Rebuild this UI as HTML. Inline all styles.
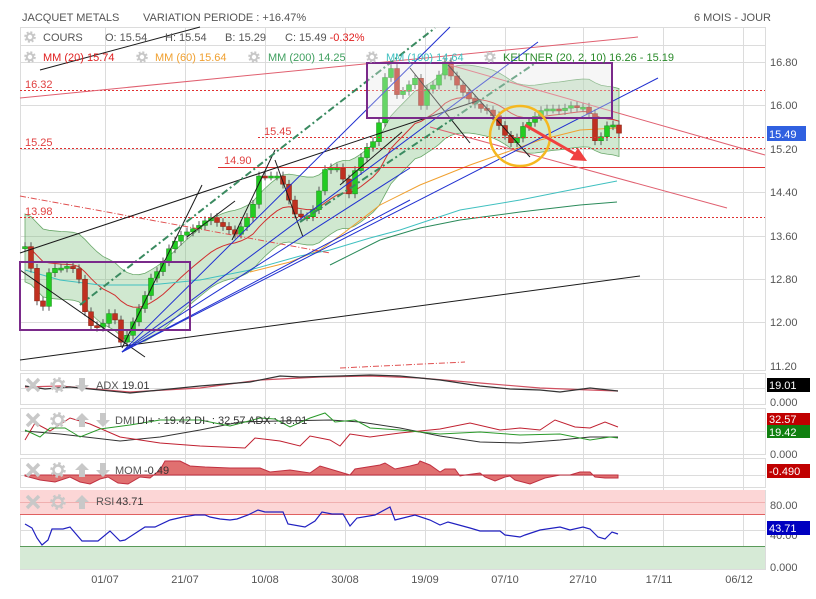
<!DOCTYPE html>
<html><head><meta charset="utf-8">
<style>
body{margin:0;background:#fff;width:816px;height:599px;overflow:hidden;font-family:"Liberation Sans",sans-serif;}
svg{position:absolute;left:0;top:0}
text{font-family:"Liberation Sans",sans-serif;font-size:11px}
</style></head><body>
<svg id="s" width="816" height="599" xmlns="http://www.w3.org/2000/svg">
<defs>
<g id="ix"><path d="M-6,-6L6,6M6,-6L-6,6" stroke="#c8c8c8" stroke-width="3.5"/></g>
<g id="ig"><circle r="4.5" fill="none" stroke="#c8c8c8" stroke-width="2.5"/><circle r="6.5" fill="none" stroke="#c8c8c8" stroke-width="2.5" stroke-dasharray="2.5,2.6"/></g>
<g id="isg"><circle r="3.2" fill="none" stroke="#c8c8c8" stroke-width="2"/><circle r="4.8" fill="none" stroke="#c8c8c8" stroke-width="2" stroke-dasharray="2,1.8"/></g>
<g id="iu"><polygon points="0,-7 7,0 3,0 3,7 -3,7 -3,0 -7,0" fill="#c8c8c8"/></g>
<g id="id"><polygon points="0,7 7,0 3,0 3,-7 -3,-7 -3,0 -7,0" fill="#c8c8c8"/></g>
</defs>
<g fill="none" stroke="#dcdcdc" stroke-width="1">
<rect x="20.5" y="27.5" width="745" height="343"/>
<rect x="20.5" y="373.5" width="745" height="31"/>
<rect x="20.5" y="408.5" width="745" height="46"/>
<rect x="20.5" y="458.5" width="745" height="29"/>
<rect x="20.5" y="490.5" width="745" height="79"/>
<path d="M105.5 27V370M185.5 27V370M265.5 27V370M345.5 27V370M425.5 27V370M505.5 27V370M583.5 27V370M663.5 27V370M743.5 27V370
M105.5 373V569M185.5 373V569M265.5 373V569M345.5 373V569M425.5 373V569M505.5 373V569M583.5 373V569M663.5 373V569M743.5 373V569
M20 62.5H765M20 105.5H765M20 149.5H765M20 192.5H765M20 236.5H765M20 279.5H765M20 322.5H765M20 45.5H765
M20 388.5H765M20 431.5H765M20 475.5H765M20 530.5H765"/>
</g>
<rect x="20" y="490" width="745" height="24" fill="#fcd6d6"/>
<line x1="20" y1="514.5" x2="765" y2="514.5" stroke="#e06060"/>
<rect x="20" y="546" width="745" height="23" fill="#d6ead6"/>
<line x1="20" y1="546.5" x2="765" y2="546.5" stroke="#5a9a5a"/>
<line x1="20" y1="502.5" x2="765" y2="502.5" stroke="#f0b0b0"/>

<g id="keltner"></g>
<polyline fill="none" stroke="#f0a030" stroke-width="1" points="250,272 290,262 320,250 345,232 380,205 420,185 470,165 507,152 540,140 580,130 617,128"/>
<polyline fill="none" stroke="#40c0c0" stroke-width="1" points="25,270 60,280 100,285 150,285 200,280 250,270 300,256 330,250 370,238 400,230 460,210 520,200 560,192 617,181"/>
<polyline fill="none" stroke="#2a8a5a" stroke-width="1" points="330,265 380,240 420,228 460,220 520,212 580,205 617,202"/>
<g id="candles"></g>

<g stroke="#e03030" stroke-width="1" stroke-dasharray="2,2" fill="none">
<line x1="20" y1="90.5" x2="765" y2="90.5"/>
<line x1="20" y1="148.5" x2="765" y2="148.5"/>
<line x1="258" y1="137.5" x2="765" y2="137.5"/>
<line x1="20" y1="217.5" x2="765" y2="217.5"/>
</g>
<line x1="218" y1="167.5" x2="765" y2="167.5" stroke="#e03030"/>
<g fill="#e04040" font-size="11"><text x="25" y="88">16.32</text><text x="25" y="146">15.25</text><text x="264" y="135">15.45</text><text x="224" y="164">14.90</text><text x="25" y="215">13.98</text></g>
<line x1="20" y1="196" x2="330" y2="253" stroke="#e05050" stroke-dasharray="6,2,1,2"/>
<line x1="340" y1="368" x2="465" y2="362" stroke="#e05050" stroke-dasharray="6,2,1,2"/>

<g fill="none" stroke-width="1">
<line x1="20" y1="98" x2="638" y2="37" stroke="#e06070"/>
<line x1="450" y1="65" x2="765" y2="155" stroke="#e06070"/>
<line x1="430" y1="127" x2="727" y2="208" stroke="#e06070"/>
<g stroke="#1a1a1a">
<line x1="20" y1="360" x2="640" y2="276"/>
<line x1="20" y1="253" x2="480" y2="100"/>
<line x1="40" y1="70" x2="200" y2="27"/>
<line x1="20" y1="270" x2="145" y2="357"/>
<line x1="122" y1="348" x2="202" y2="185"/>
<line x1="187" y1="237" x2="235" y2="201"/>
<line x1="232" y1="240" x2="275" y2="150"/>
<line x1="275" y1="160" x2="303" y2="237"/>
<line x1="340" y1="185" x2="402" y2="132"/>
<line x1="410" y1="68" x2="470" y2="143"/>
<line x1="448" y1="65" x2="530" y2="157"/>
</g>
<g stroke="#2030d0">
<line x1="122" y1="352" x2="450" y2="27"/>
<line x1="122" y1="352" x2="538" y2="42"/>
<line x1="122" y1="352" x2="658" y2="78"/>
<line x1="122" y1="352" x2="410" y2="168"/>
<line x1="122" y1="352" x2="410" y2="200"/>
</g>
<g stroke="#3a8a60" stroke-width="2" stroke-dasharray="7,3,2,3">
<line x1="80" y1="305" x2="435" y2="28"/>
<line x1="300" y1="222" x2="537" y2="62"/>
</g>
</g>
<rect x="20" y="262" width="170" height="68" fill="none" stroke="#7a2a8a" stroke-width="2"/>
<rect x="367" y="63" width="245" height="55" fill="rgba(230,230,230,0.35)" stroke="#7a2a8a" stroke-width="2"/>
<circle cx="520" cy="136" r="30" fill="none" stroke="#f5b820" stroke-width="2.5"/>
<line x1="525" y1="125" x2="577" y2="155" stroke="#f04040" stroke-width="3"/>
<polygon points="587,161 570,160 578,148" fill="#f04040"/>

<polyline fill="none" stroke="#d05060" stroke-width="1.2" points="25,387 60,386 130,392 200,388 260,380 320,377 370,376 420,378 480,383 540,388 590,390 618,391"/>
<polyline fill="none" stroke="#333" stroke-width="1.2" points="25,386 45,389 70,387 130,393 160,390 200,386 250,382 280,376 300,377 340,376 370,375 400,376 440,380 480,386 510,389 540,390 560,392 590,388 618,391"/>
<polyline fill="none" stroke="#333" points="25,431 60,434 120,441 160,437 200,430 240,422 280,421 330,420 360,422 400,428 440,436 480,442 520,443 560,440 590,437 618,437"/>
<polyline fill="none" stroke="#c02030" points="25,440 35,423 50,431 70,418 90,424 120,437 160,443 200,446 245,448 255,438 280,441 300,446 310,436 330,440 340,446 350,434 370,437 400,433 440,429 470,423 500,430 520,428 540,430 555,420 575,427 590,428 605,422 618,427"/>
<polyline fill="none" stroke="#2a9a2a" points="25,430 40,437 50,428 65,428 80,437 100,429 130,425 160,420 200,420 230,426 260,418 275,419 290,427 310,418 325,413 335,422 355,420 370,428 400,430 440,434 480,432 520,435 560,434 590,440 610,437 618,438"/>
<polygon fill="#e07070" stroke="#c03040" points="25,475 25,476 40,480 55,482 70,477 80,482 90,484 100,479 108,477 118,483 128,484 140,477 150,478 160,470 165,461 180,461 190,466 205,467 230,468 260,468 270,472 290,470 310,473 320,466 340,472 350,475 355,469 380,465 385,463 395,469 410,466 418,464 420,461 430,465 440,472 445,469 455,469 460,476 465,475 480,473 485,477 495,481 505,477 510,476 515,480 530,484 545,478 560,475 570,475 580,472 590,472 595,477 605,478 618,478 618,475"/>
<polyline fill="none" stroke="#2020c0" stroke-width="1.2" points="25,524 32,528 37,538 42,545 48,540 52,529 63,529 70,527 82,541 98,541 110,531 120,541 125,540 145,527 155,527 170,520 183,517 195,515 205,515 210,517 220,519 230,520 237,519 248,515 258,510 265,512 283,512 288,524 305,527 315,521 322,512 332,514 343,514 350,526 357,518 375,515 390,507 395,520 415,515 430,520 440,525 448,522 470,528 480,531 500,531 505,535 520,537 525,535 540,530 560,527 570,530 583,527 590,529 598,537 605,539 612,532 618,534"/>

<use href="#ix" x="33" y="385"/><use href="#ig" x="58" y="385"/><use href="#id" x="82" y="385"/>
<use href="#ix" x="33" y="420"/><use href="#ig" x="58" y="420"/><use href="#iu" x="82" y="420"/><use href="#id" x="103" y="420"/>
<use href="#ix" x="33" y="470"/><use href="#ig" x="58" y="470"/><use href="#iu" x="82" y="470"/><use href="#id" x="103" y="470"/>
<use href="#ix" x="33" y="502"/><use href="#ig" x="58" y="502"/><use href="#iu" x="82" y="502"/>
<g fill="#555"><text x="96" y="389">ADX</text><text x="122" y="389" fill="#333">19.01</text>
<text x="115" y="424">DMI</text><text x="137" y="424" fill="#333">DI+ : 19.42 DI- : 32.57 ADX : 18.01</text>
<text x="115" y="474">MOM</text><text x="144" y="474" fill="#333">-0.49</text>
<text x="96" y="505">RSI</text><text x="116" y="505" fill="#333">43.71</text></g>

<g fill="#555"><text x="22" y="21" font-size="12">JACQUET METALS</text><text x="143" y="21" font-size="12">VARIATION PERIODE : +16.47%</text><text x="694" y="21" font-size="12">6 MOIS - JOUR</text></g>
<use href="#isg" x="30" y="37"/><use href="#isg" x="30" y="57"/><use href="#isg" x="142" y="57"/><use href="#isg" x="254" y="57"/><use href="#isg" x="372" y="57"/><use href="#isg" x="490" y="57"/>
<g font-size="11">
<text x="43" y="41" fill="#555">COURS</text>
<text x="105" y="41" fill="#555">O: 15.54</text><text x="165" y="41" fill="#555">H: 15.54</text><text x="225" y="41" fill="#555">B: 15.29</text><text x="285" y="41" fill="#555">C: 15.49 <tspan fill="#e02020">-0.32%</tspan></text>
<text x="43" y="61" fill="#e02020">MM (20)  15.74</text>
<text x="155" y="61" fill="#f0a030">MM (60)  15.64</text>
<text x="268" y="61" fill="#40a060">MM (200)  14.25</text>
<text x="386" y="61" fill="#40c0c0">MM (100)  14.64</text>
<text x="503" y="61" fill="#2a8a2a">KELTNER (20, 2, 10)  16.26 - 15.19</text>
</g>
<g fill="#555" font-size="11"><text x="770" y="66">16.80</text><text x="770" y="109">16.00</text><text x="770" y="153">15.20</text><text x="770" y="196">14.40</text><text x="770" y="240">13.60</text><text x="770" y="283">12.80</text><text x="770" y="326">12.00</text><text x="770" y="370">11.20</text>
<text x="770" y="406">0.000</text><text x="770" y="458">0.000</text><text x="770" y="509">80.00</text><text x="770" y="539">40.00</text><text x="770" y="571">0.000</text></g>
<rect x="767" y="126" width="39" height="15" fill="#3060e0"/><text x="769" y="138" fill="#fff" font-size="12">15.49</text>
<rect x="767" y="378" width="43" height="14" fill="#000"/><text x="769" y="389" fill="#fff" font-size="11.5">19.01</text>
<rect x="767" y="413" width="43" height="12" fill="#c00000"/><text x="769" y="423" fill="#fff" font-size="11.5">32.57</text>
<rect x="767" y="425" width="43" height="13" fill="#108010"/><text x="769" y="436" fill="#fff" font-size="11.5">19.42</text>
<rect x="767" y="464" width="43" height="14" fill="#c00000"/><text x="769" y="475" fill="#fff" font-size="11.5">-0.490</text>
<rect x="767" y="521" width="43" height="14" fill="#0000c0"/><text x="769" y="532" fill="#fff" font-size="11.5">43.71</text>
<g fill="#555" font-size="11" text-anchor="middle"><text x="105" y="583">01/07</text><text x="185" y="583">21/07</text><text x="265" y="583">10/08</text><text x="345" y="583">30/08</text><text x="425" y="583">19/09</text><text x="505" y="583">07/10</text><text x="583" y="583">27/10</text><text x="659" y="583">17/11</text><text x="739" y="583">06/12</text></g>
</svg>
<script>
var P=[[25,13.4],[30,13.1],[37,12.4],[43,12.3],[48,12.9],[53,13.0],[60,13.0],[70,13.05],[78,12.9],[85,12.2],[90,11.95],[100,11.9],[107,12.1],[113,12.3],[117,11.8],[122,11.6],[128,11.8],[135,12.1],[145,12.5],[150,12.8],[160,13.0],[170,13.4],[180,13.6],[190,13.7],[200,13.8],[210,13.95],[220,13.8],[230,13.7],[237,13.6],[243,13.85],[250,14.0],[255,14.3],[260,14.8],[265,14.7],[270,14.7],[280,14.7],[288,14.3],[295,14.0],[300,13.95],[310,13.95],[318,14.3],[322,14.8],[330,14.85],[340,14.85],[348,14.3],[355,14.8],[360,15.0],[365,15.2],[372,15.3],[378,15.5],[383,16.4],[390,16.8],[395,16.2],[400,16.2],[405,16.3],[410,16.4],[415,16.5],[420,15.95],[427,16.3],[435,16.4],[445,16.8],[452,16.5],[460,16.3],[470,16.1],[480,15.95],[490,15.9],[500,15.6],[510,15.3],[517,15.4],[522,15.6],[530,15.7],[540,15.9],[550,15.95],[560,15.9],[570,16.0],[580,15.95],[588,16.0],[592,15.4],[598,15.3],[604,15.55],[610,15.7],[615,15.6],[619,15.49]];
function Y(p){return 62+(16.8-p)*54.3}
function ip(x){for(var i=1;i<P.length;i++){if(x<=P[i][0]){var a=P[i-1],b=P[i];return a[1]+(b[1]-a[1])*(x-a[0])/(b[0]-a[0]);}}return P[P.length-1][1];}
var s="";
var prev=ip(25),m=prev,mids=[],up=[],lo=[];
for(var x=25;x<=619;x+=6){var c=ip(x);var o=prev;var g=c>=o;var hi=Math.max(o,c)+0.08,l=Math.min(o,c)-0.08;
var col=g?"#22cc22":"#c03020",st=g?"#1a8a1a":"#802010";
s+='<line x1="'+x+'" y1="'+Y(hi)+'" x2="'+x+'" y2="'+Y(l)+'" stroke="#555"/>';
var t=Y(Math.max(o,c)),h=Math.max(2,Math.abs(Y(o)-Y(c)));
s+='<rect x="'+(x-2.5)+'" y="'+t+'" width="5" height="'+h+'" fill="'+col+'" stroke="'+st+'" stroke-width="0.5"/>';
prev=c;m=m+(c-m)*0.12;mids.push(x+','+Y(m));up.push(x+','+Y(m+0.6));lo.unshift(x+','+Y(m-0.65));}
document.getElementById("candles").innerHTML=s;
document.getElementById("keltner").innerHTML='<polygon points="'+up.join(' ')+' '+lo.join(' ')+'" fill="rgba(120,190,120,0.35)" stroke="#6aa86a" stroke-width="0.8"/><polyline points="'+mids.join(' ')+'" fill="none" stroke="#d03030"/>';
</script>
</body></html>
